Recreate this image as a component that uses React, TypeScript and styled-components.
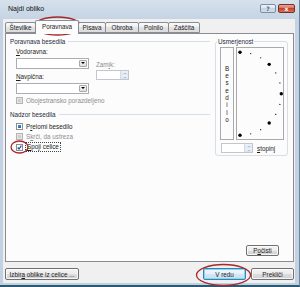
import React from 'react'
import styled, { createGlobalStyle } from 'styled-components'

const GlobalStyle = createGlobalStyle`
  body {
    margin: 0;
    background: #ffffff;
  }
`

const Window = styled.div`
  position: relative;
  box-sizing: border-box;
  width: 300px;
  height: 287px;
  display: flex;
  flex-direction: column;
  background: linear-gradient(#d6e1ec, #c4d3e3 20px, #c2d1e1);
  border-right: 1px solid #6a879e;
  border-bottom: 2px solid #2c5a72;
  font-family: 'Liberation Sans', Arial, sans-serif;
  font-size: 6.3px;
  color: #1c1c1c;
`

const TitleBar = styled.div`
  height: 19px;
  flex: none;
  display: flex;
  align-items: flex-start;
  padding: 0 4px 0 8px;
`

const Title = styled.span`
  font-size: 7px;
  line-height: 8px;
  margin-top: 5px;
  color: #111;
`

const CaptionButtons = styled.div`
  margin-left: auto;
  margin-top: 4px;
  display: flex;
  gap: 2px;
`

const CaptionButton = styled.div<{ $close?: boolean }>`
  box-sizing: border-box;
  width: ${p => (p.$close ? 17 : 16)}px;
  height: 9px;
  border: 1px solid ${p => (p.$close ? '#7a3023' : '#7d8ea3')};
  border-radius: 2px;
  background: ${p =>
    p.$close
      ? 'linear-gradient(#eaa797, #d06a55 50%, #c3432d 50%, #d7725c)'
      : 'linear-gradient(#eef3f8, #d9e3ee 50%, #c8d5e3 50%, #d2dde9)'};
  color: ${p => (p.$close ? '#ffffff' : '#4d5f75')};
  font-family: 'DejaVu Sans', sans-serif;
  font-size: 6px;
  font-weight: bold;
  line-height: 7px;
  text-align: center;
`

const Client = styled.div`
  flex: 1;
  display: flex;
  flex-direction: column;
  margin: 0 4px 2px 3px;
  padding: 1px 1px 3px 2px;
  background: #f0f0f0;
`

const TabStrip = styled.div`
  position: relative;
  z-index: 1;
  height: 14px;
  margin-bottom: -1px;
  padding-left: 1px;
  display: flex;
  align-items: flex-start;
`

const Tab = styled.div<{ $w: number; $active?: boolean }>`
  box-sizing: border-box;
  width: ${p => p.$w}px;
  height: ${p => (p.$active ? 14 : 11)}px;
  margin-top: ${p => (p.$active ? 0 : 2)}px;
  margin-left: -1px;
  border: 1px solid #898c95;
  border-bottom: ${p => (p.$active ? 'none' : '1px solid #898c95')};
  border-radius: 2px 2px 0 0;
  background: ${p =>
    p.$active ? '#fcfcfc' : 'linear-gradient(#fbfbfb, #ececec 50%, #e3e3e3 50%, #dcdcdc)'};
  display: flex;
  align-items: center;
  justify-content: center;
  padding-bottom: ${p => (p.$active ? 2 : 0)}px;
  line-height: 7px;
  white-space: nowrap;
`

const Panel = styled.div`
  flex: 1;
  display: flex;
  flex-direction: column;
  border: 1px solid #898c95;
  background: #fcfcfc;
  padding: 4px 5px 5px 4px;
`

const Columns = styled.div`
  display: flex;
  align-items: flex-start;
`

const LeftColumn = styled.div`
  width: 200px;
  display: flex;
  flex-direction: column;
`

const GroupHeader = styled.div<{ $top?: number }>`
  height: 7px;
  line-height: 7px;
  margin-top: ${p => p.$top ?? 0}px;
  display: flex;
  align-items: center;
  gap: 3px;
  color: #1e2a3a;
  white-space: nowrap;

  &::after {
    content: '';
    flex: 1;
    height: 1px;
    background: #d5dfe5;
  }
`

const FieldGrid = styled.div`
  margin: 2px 0 0 6px;
  display: grid;
  grid-template-columns: 73px 33px;
  grid-template-rows: 9px 11px 11px 11px;
  column-gap: 7px;
  row-gap: 1.5px;
`

const FieldLabel = styled.div<{ $muted?: boolean }>`
  align-self: end;
  line-height: 8px;
  color: ${p => (p.$muted ? '#8d8d8d' : '#1c1c1c')};
  white-space: nowrap;
`

const Key = styled.span`
  text-decoration: underline;
`

const Combo = styled.div`
  box-sizing: border-box;
  height: 11px;
  border: 1px solid #abadb3;
  background: #ffffff;
  display: flex;
  justify-content: flex-end;
  padding: 1px;
`

const ComboArrow = styled.div`
  box-sizing: border-box;
  width: 8px;
  border: 1px solid #a7a7a7;
  border-radius: 1px;
  background: linear-gradient(#f6f6f6, #e1e1e1);
  display: flex;
  align-items: center;
  justify-content: center;

  &::after {
    content: '';
    border-left: 2px solid transparent;
    border-right: 2px solid transparent;
    border-top: 2px solid #000;
  }
`

const Spin = styled.div<{ $w: number }>`
  box-sizing: border-box;
  width: ${p => p.$w}px;
  height: 10px;
  border: 1px solid #c3c6cc;
  background: #ffffff;
  display: flex;
  justify-content: flex-end;
`

const SpinButtons = styled.div`
  width: 7px;
  display: flex;
  flex-direction: column;
  border-left: 1px solid #d5dbe3;
`

const SpinArrow = styled.div<{ $up?: boolean }>`
  flex: 1;
  background: linear-gradient(#eef3f9, #d8e2ee);
  display: flex;
  align-items: center;
  justify-content: center;

  &::after {
    content: '';
    border-left: 1.5px solid transparent;
    border-right: 1.5px solid transparent;
    ${p => (p.$up ? 'border-bottom' : 'border-top')}: 1.5px solid #8e9cb0;
  }
`

const CheckRow = styled.div<{ $top?: number; $muted?: boolean }>`
  margin: ${p => p.$top ?? 0}px 0 0 6px;
  height: 7px;
  display: flex;
  align-items: center;
  gap: 3px;
  color: ${p => (p.$muted ? '#8d8d8d' : '#1c1c1c')};
  line-height: 7px;
  white-space: nowrap;
`

const CheckList = styled.div`
  margin-top: 5px;
  display: flex;
  flex-direction: column;
  gap: 3.5px;
`

const Box = styled.div<{ $state: 'off' | 'disabled' | 'mixed' | 'on' }>`
  position: relative;
  box-sizing: border-box;
  width: 7px;
  height: 7px;
  flex: none;
  border: 1px solid ${p => (p.$state === 'disabled' ? '#b4b4b4' : '#8f8f8f')};
  background: ${p => (p.$state === 'disabled' ? '#e4e4e4' : '#ffffff')};
  padding: 1px;
  display: flex;

  &::after {
    content: '';
    flex: 1;
    background: ${p =>
      p.$state === 'mixed'
        ? 'linear-gradient(135deg, #4aa0e0, #14599f)'
        : p.$state === 'disabled'
        ? '#d0d0d0'
        : 'transparent'};
  }
`

const CheckMark = styled.svg`
  position: absolute;
  left: -1px;
  top: -1px;
  width: 7px;
  height: 7px;
`

const FocusText = styled.span`
  outline: 1px dotted #444;
  padding: 0 1px;
  line-height: 8px;
`

const Orientation = styled.fieldset`
  box-sizing: border-box;
  width: 73px;
  margin: 0 0 0 5px;
  padding: 0 3px 2px 4px;
  border: 1px solid #d5dfe5;
  border-radius: 3px;
  min-width: 0;
`

const Legend = styled.legend`
  margin-left: -3px;
  padding: 0 1px;
  line-height: 7px;
  color: #1e2a3a;
`

const DialRow = styled.div`
  margin-top: 2px;
  display: flex;
  gap: 2px;
`

const TextBox = styled.div`
  box-sizing: border-box;
  width: 14px;
  height: 93px;
  border: 1px solid #a9a9a9;
  display: flex;
  flex-direction: column;
  align-items: center;
  justify-content: center;
  line-height: 7.3px;
  padding-top: 1px;
`

const Dial = styled.div`
  box-sizing: border-box;
  width: 48px;
  height: 93px;
  border: 1px solid #a9a9a9;
  display: flex;
`

const DegreeRow = styled.div`
  margin: 3px 0 0 1px;
  display: flex;
  align-items: center;
  gap: 4px;
  line-height: 7px;
`

const Footer = styled.div`
  margin-top: auto;
  display: flex;
  justify-content: flex-end;
  padding-right: 9px;
`

const ButtonRow = styled.div`
  margin-top: 6px;
  display: flex;
  gap: 5px;
`

const Button = styled.button<{ $w: number; $primary?: boolean; $push?: boolean }>`
  box-sizing: border-box;
  width: ${p => p.$w}px;
  height: ${p => (p.$primary !== undefined ? 12 : 11)}px;
  margin-left: ${p => (p.$push ? 'auto' : '0')};
  padding: 0;
  font: inherit;
  line-height: 7px;
  color: #1c1c1c;
  border: 1px solid ${p => (p.$primary ? '#3c7fb1' : '#707070')};
  border-radius: 2px;
  background: ${p =>
    p.$primary
      ? 'linear-gradient(#f2f8fc, #e4f0f8 50%, #d3e6f3 50%, #c9dfee)'
      : 'linear-gradient(#f4f4f4, #ececec 50%, #dddddd 50%, #d2d2d2)'};
  box-shadow: inset 0 0 0 1px ${p => (p.$primary ? '#7fd8fa' : 'rgba(255, 255, 255, 0.75)')};
  white-space: nowrap;
`

const Marks = styled.svg`
  position: absolute;
  left: 0;
  top: 0;
  pointer-events: none;
`

const tabs = [
  { label: 'Številke', w: 31 },
  { label: 'Poravnava', w: 44, active: true },
  { label: 'Pisava', w: 28 },
  { label: 'Obroba', w: 34 },
  { label: 'Polnilo', w: 31 },
  { label: 'Zaščita', w: 32 },
]

// 13 marks every 15 degrees on a half circle, bigger ones every 45
const dots = Array.from({ length: 13 }, (_, i) => {
  const a = (-90 + i * 15) * (Math.PI / 180)
  return { x: 3 + 41.3 * Math.cos(a), y: 45.7 + 41.5 * Math.sin(a), big: i % 3 === 0 }
})

export default function App() {
  return (
    <>
      <GlobalStyle />
      <Window>
        <TitleBar>
          <Title>Najdi obliko</Title>
          <CaptionButtons>
            <CaptionButton>?</CaptionButton>
            <CaptionButton $close>x</CaptionButton>
          </CaptionButtons>
        </TitleBar>
        <Client>
          <TabStrip>
            {tabs.map(t => (
              <Tab key={t.label} $w={t.w} $active={t.active}>
                {t.label}
              </Tab>
            ))}
          </TabStrip>
          <Panel>
            <Columns>
              <LeftColumn>
                <GroupHeader>Poravnava besedila</GroupHeader>
                <FieldGrid>
                  <FieldLabel>
                    <Key>V</Key>odoravna:
                  </FieldLabel>
                  <div />
                  <Combo>
                    <ComboArrow />
                  </Combo>
                  <FieldLabel $muted>
                    Zam<Key>i</Key>k:
                  </FieldLabel>
                  <FieldLabel>
                    <Key>N</Key>avpična:
                  </FieldLabel>
                  <Spin $w={33}>
                    <SpinButtons>
                      <SpinArrow $up />
                      <SpinArrow />
                    </SpinButtons>
                  </Spin>
                  <Combo>
                    <ComboArrow />
                  </Combo>
                </FieldGrid>
                <CheckRow $top={3} $muted>
                  <Box $state="disabled" />
                  <span>Obojestransko porazdeljeno</span>
                </CheckRow>
                <GroupHeader $top={7}>Nadzor besedila</GroupHeader>
                <CheckList>
                  <CheckRow>
                    <Box $state="mixed" />
                    <span>
                      P<Key>r</Key>elomi besedilo
                    </span>
                  </CheckRow>
                  <CheckRow $muted>
                    <Box $state="disabled" />
                    <span>
                      S<Key>k</Key>rči, da ustreza
                    </span>
                  </CheckRow>
                  <CheckRow>
                    <Box $state="off">
                      <CheckMark viewBox="0 0 7 7">
                        <path d="M1.7 3.5 L3 5 L5.4 1.7" fill="none" stroke="#1f4f9a" strokeWidth="1.2" />
                      </CheckMark>
                    </Box>
                    <FocusText>
                      <Key>S</Key>poji celice
                    </FocusText>
                  </CheckRow>
                </CheckList>
              </LeftColumn>
              <Orientation>
                <Legend>Usmerjenost</Legend>
                <DialRow>
                  <TextBox>
                    {'Besedilo'.split('').map((c, i) => (
                      <span key={i}>{c}</span>
                    ))}
                  </TextBox>
                  <Dial>
                    <svg width="46" height="91" viewBox="0 0 46 91">
                      {dots.map((d, i) => (
                        <circle key={i} cx={d.x} cy={d.y} r={d.big ? 1.7 : 0.6} fill="#000" />
                      ))}
                    </svg>
                  </Dial>
                </DialRow>
                <DegreeRow>
                  <Spin $w={32}>
                    <SpinButtons>
                      <SpinArrow $up />
                      <SpinArrow />
                    </SpinButtons>
                  </Spin>
                  <span>
                    <Key>s</Key>topinj
                  </span>
                </DegreeRow>
              </Orientation>
            </Columns>
            <Footer>
              <Button $w={33}>
                P<Key>o</Key>čisti
              </Button>
            </Footer>
          </Panel>
          <ButtonRow>
            <Button $w={74} $primary={false}>
              Izbir<Key>a</Key> oblike iz celice ...
            </Button>
            <Button $w={43} $primary $push>
              V redu
            </Button>
            <Button $w={43} $primary={false}>
              Prekliči
            </Button>
          </ButtonRow>
        </Client>
        <Marks width="300" height="287" viewBox="0 0 300 287">
          <g fill="none" stroke="#a8272b" strokeWidth="1.3">
            <ellipse cx="57.5" cy="26" rx="23.5" ry="9" />
            <ellipse cx="19.5" cy="147" rx="8.5" ry="6" />
            <ellipse cx="223.5" cy="275" rx="27" ry="10.5" />
          </g>
        </Marks>
      </Window>
    </>
  )
}
